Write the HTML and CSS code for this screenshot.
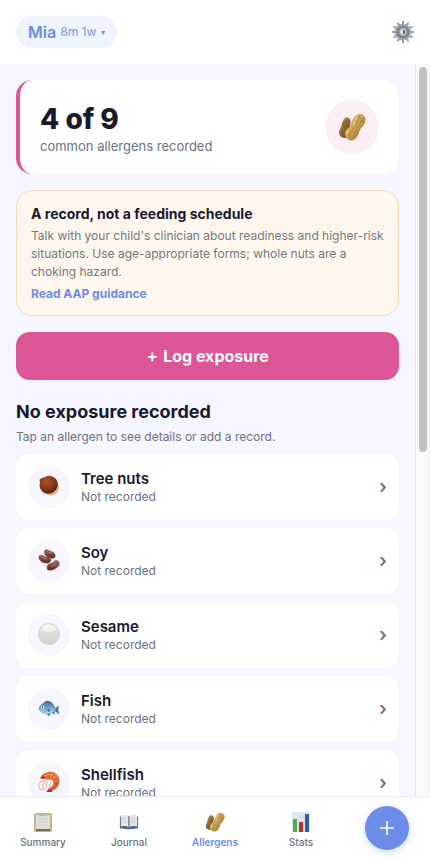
FILE: index.html
```html
<!DOCTYPE html>
<html lang="en">
<head>
<meta charset="utf-8">
<meta name="viewport" content="width=device-width, initial-scale=1">
<title>Allergens</title>
<link rel="stylesheet" href="styles.css">
</head>
<body>
<svg class="defs" aria-hidden="true">
  <defs>
    <linearGradient id="shell" x1="0" y1="0" x2="1" y2="1"><stop offset="0" stop-color="#e6c77c"/><stop offset=".5" stop-color="#cda354"/><stop offset="1" stop-color="#7d5727"/></linearGradient>
    <linearGradient id="shell-dark" x1="0" y1="0" x2="1" y2="1"><stop offset="0" stop-color="#c99f50"/><stop offset="1" stop-color="#4f3515"/></linearGradient>
    <radialGradient id="nut" cx=".4" cy=".3" r=".8"><stop offset="0" stop-color="#ad532a"/><stop offset=".5" stop-color="#8a3a1b"/><stop offset="1" stop-color="#481a0c"/></radialGradient>
    <linearGradient id="bean" x1="0" y1="0" x2="0" y2="1"><stop offset="0" stop-color="#a5675c"/><stop offset="1" stop-color="#572822"/></linearGradient>
    <linearGradient id="pearl" x1="0" y1="0" x2="0" y2="1"><stop offset="0" stop-color="#f0f0ee"/><stop offset=".45" stop-color="#dbdbd8"/><stop offset="1" stop-color="#d3d4d0"/></linearGradient>
    <linearGradient id="scales" x1="0" y1="0" x2="0" y2="1"><stop offset="0" stop-color="#487ba9"/><stop offset=".5" stop-color="#77add6"/><stop offset="1" stop-color="#c1def0"/></linearGradient>
    <linearGradient id="prawn" x1="0" y1="0" x2="1" y2="1"><stop offset="0" stop-color="#cf4b20"/><stop offset=".5" stop-color="#ee8346"/><stop offset="1" stop-color="#c53a20"/></linearGradient>
    <linearGradient id="page" x1="0" y1="0" x2="1" y2="0"><stop offset="0" stop-color="#dfe3e7"/><stop offset=".8" stop-color="#eef0f2"/><stop offset="1" stop-color="#9ca6b0"/></linearGradient>
    <symbol id="peanuts" viewBox="0 0 28 28">
      <path d="M6 6C9 3 13 5 12.500 10C12 13 11 14 12 17C13 21 11 25 7 25C2 25 0 21 1.500 17C4 14 3 10 6 6Z" fill="url(#shell-dark)"/>
      <path d="M4 12L8 8M4 16L9 11M3 21L7 16" fill="none" stroke="#77531f" stroke-width=".6"/>
      <path d="M17 3C21-1 28 1 27.500 7C27.500 12 23 14 21.500 18C20 24 16 29 11 27C6 25 6 19 9 16C14 13 13 7 17 3Z" fill="url(#shell)"/>
      <path d="M22 2C19 7 20 11 15 16C12 19 11 22 11 26M26 4C23 10 21 12 18 17L15 25" fill="none" stroke="#a67b39" stroke-width=".7"/>
      <path d="M17 7L20 9M22 8L25 9M13 17L17 20M10 20L13 23M20 4L23 5" fill="none" stroke="#967033" stroke-width=".6"/>
      <path d="M19 4C17 6 17 9 16 12M10 18L9 21" fill="none" stroke="#f2dc9c"/>
    </symbol>
  </defs>
</svg>

<header class="topbar">
  <button class="child" type="button"><span class="child-name">Mia</span><span class="child-age">8m 1w</span><span class="child-caret">▾</span></button>
  <button class="settings" type="button" aria-label="Settings">
    <svg width="22" height="22" viewBox="0 0 22 22">
      <path d="M11 0V22M0 11H22M1.500 5.500L20.500 16.500M5.500 1.500L16.500 20.500M16.500 1.500L5.500 20.500M20.500 5.500L1.500 16.500" stroke="#98a3ac" stroke-width="2"/>
      <circle cx="11" cy="11" r="8" fill="#a0aab2" stroke="#8a959f" stroke-width=".6"/>
      <circle cx="11" cy="11" r="5.500" fill="#8a959e" stroke="#63707b" stroke-width="1.200"/>
      <circle cx="11" cy="11" r="3.400" fill="#dce3e8" stroke="#9da8b1"/>
      <path d="M11 9A2 2 0 0 1 11 13Z" fill="#3f4b56"/>
    </svg>
  </button>
</header>

<div class="viewport">
  <main class="content">
    <section class="progress">
      <div>
        <h1 class="progress-count">4 of 9</h1>
        <p class="progress-label">common allergens recorded</p>
      </div>
      <div class="progress-icon"><svg width="28" height="28" aria-hidden="true"><use href="#peanuts"/></svg></div>
    </section>

    <section class="notice">
      <h2 class="notice-title">A record, not a feeding schedule</h2>
      <p class="notice-text">Talk with your child's clinician about readiness and higher-risk situations. Use age-appropriate forms; whole nuts are a choking hazard.</p>
      <a class="notice-link" href="#">Read AAP guidance</a>
    </section>

    <button class="log" type="button"><span class="log-plus">+</span><span>Log exposure</span></button>

    <section>
      <h2 class="list-title">No exposure recorded</h2>
      <p class="list-hint">Tap an allergen to see details or add a record.</p>
      <div class="list">
        <button class="row" type="button">
          <span class="row-icon"><svg width="22" height="22" viewBox="0 0 24 24" aria-hidden="true"><path d="M19 5C24 10 24 17 20 20C17 23 12 23 8 20Z" fill="#d3bf85"/><path d="M2 5C4 2 7 3 10 1C16 0 22 4 21.500 11C21 18 14 22 8 20C3 18 1 13 2 9C3 8 1 7 2 5Z" fill="url(#nut)"/></svg></span>
          <span class="row-text"><span class="row-name">Tree nuts</span><span class="row-state">Not recorded</span></span>
          <span class="row-chevron">›</span>
        </button>
        <button class="row" type="button">
          <span class="row-icon"><svg width="22" height="22" viewBox="0 0 24 24" aria-hidden="true"><g fill="url(#bean)" stroke="#6b3630" stroke-width=".5"><path d="M7 2C9-1 12 2 15 3C19 4 20 9 17 10C12 11 6 7 7 2Z"/><path d="M1 8C3 5 6 8 10 9C14 9 16 13 12 15C7 17 0 13 1 8Z"/><path d="M10 19C11 15 15 17 17 14C19 11 24 13 23 17C21 22 13 25 10 22Z"/></g><path d="M10 3L15 5M4 9L10 11M14 19C17 19 19 17 20 15" fill="none" stroke="#c48d83" stroke-width=".8"/></svg></span>
          <span class="row-text"><span class="row-name">Soy</span><span class="row-state">Not recorded</span></span>
          <span class="row-chevron">›</span>
        </button>
        <button class="row" type="button">
          <span class="row-icon"><svg width="22" height="22" viewBox="0 0 24 24" aria-hidden="true"><circle cx="12" cy="12" r="11.500" fill="url(#pearl)" stroke="#c9cac6" stroke-width=".7"/><ellipse cx="12" cy="6" rx="7.500" ry="4" fill="#fff" opacity=".5"/></svg></span>
          <span class="row-text"><span class="row-name">Sesame</span><span class="row-state">Not recorded</span></span>
          <span class="row-chevron">›</span>
        </button>
        <button class="row" type="button">
          <span class="row-icon"><svg width="22" height="22" viewBox="0 0 24 24" aria-hidden="true"><path d="M6 8C7 3 12 3 16 7L18 11ZM8 17L12 21L14 18ZM15 16L18 20L18 15ZM18 13L23 9C22 12 22 15 23 19L18 15Z" fill="#3b6c98"/><path d="M1 12C3 7 8 5 13 7C17 8 18 11 20 13C17 17 12 20 7 18C4 17 1 16 1 12Z" fill="url(#scales)" stroke="#5589b3" stroke-width=".5"/><path d="M8 9C10 11 9 14 7 17" fill="none" stroke="#5b90b9" stroke-width=".7"/><path d="M10 13L14 14L11 17Z" fill="#3c729e"/><circle cx="5" cy="11" r="1.700" fill="#fff"/><circle cx="5" cy="11" r=".9" fill="#172b3c"/></svg></span>
          <span class="row-text"><span class="row-name">Fish</span><span class="row-state">Not recorded</span></span>
          <span class="row-chevron">›</span>
        </button>
        <button class="row" type="button">
          <span class="row-icon"><svg width="22" height="22" viewBox="0 0 24 24" aria-hidden="true"><path d="M2 8C4 3 11 0 16 1C22 2 24 8 23 13C22 18 18 21 13 22L12 19C16 17 18 14 16 11C14 8 9 11 2 8Z" fill="url(#prawn)"/><path d="M13 2L12 8M18 3L15 8M22 7L17 10M22 14L17 13M18 19L15 16" stroke="#b8492c" stroke-width=".6"/><path d="M13 19L16 23L9 23L11 20Z" fill="#b82921"/><path d="M8 11C3 10 0 14 1 17C2 21 6 22 8 19M9 12C5 13 4 16 6 19M11 12C9 13 8 16 10 19M14 13L12 18" fill="none" stroke="#e98468" stroke-width=".9"/><path d="M6 6C9 4 12 3 15 4" fill="none" stroke="#ffc274"/><circle cx="6" cy="7" r="1" fill="#251511"/></svg></span>
          <span class="row-text"><span class="row-name">Shellfish</span><span class="row-state">Not recorded</span></span>
          <span class="row-chevron">›</span>
        </button>
      </div>
    </section>
  </main>
  <div class="track" aria-hidden="true"><div class="thumb"></div></div>
</div>

<nav class="tabs">
  <a class="tab" href="#"><svg width="20" height="20" viewBox="0 0 20 20" aria-hidden="true"><rect x="1.500" y="1.500" width="17" height="18" rx="1" fill="#cdb978" stroke="#a3935f" stroke-width=".6"/><path d="M3 3H17V17H3Z" fill="#dcdddd"/><path d="M3 18H17" stroke="#57492a" stroke-width="1.400"/><path d="M5 7H15M5 10H15M5 13H15" stroke="#cfd1d3" stroke-width=".8"/><path d="M6 4V2H8C9 0 11 0 12 2H14V4Z" fill="#b9bcb5"/></svg><span>Summary</span></a>
  <a class="tab" href="#"><svg width="20" height="20" viewBox="0 0 22 22" aria-hidden="true"><path d="M1 5L10 4L11 5L12 4L21 5V18L12 19H10L1 18Z" fill="#486780"/><path d="M2 4C5 2 9 3 11 5V17C8 15 5 15 2 16Z" fill="url(#page)"/><path d="M20 4C17 2 13 3 11 5V17C14 15 17 15 20 16Z" fill="#e2e5e8"/><path d="M11 5V18" stroke="#53616d"/><path d="M4 6H9M4 8H9M4 10H9M4 12H9M13 6H18M13 8H18M13 10H18M13 12H18" stroke="#c3cad0" stroke-width=".7"/></svg><span>Journal</span></a>
  <a class="tab tab-active" href="#" aria-current="page"><svg width="20" height="20" aria-hidden="true"><use href="#peanuts"/></svg><span>Allergens</span></a>
  <a class="tab" href="#"><svg width="20" height="20" viewBox="0 0 20 20" aria-hidden="true"><rect x="1" y="0" width="18" height="20" fill="#e0e9ef"/><path d="M1 5H19M1 10H19M1 15H19M7 0V20M13 0V20" stroke="#cfdbe3" stroke-width=".6"/><rect x="2" y="7" width="4" height="13" fill="#4db04f"/><rect x="8" y="10" width="4" height="10" fill="#bf3030"/><rect x="14" y="2" width="4" height="18" fill="#305cad"/></svg><span>Stats</span></a>
  <div class="add-slot"><button class="add" type="button" aria-label="Add"><svg width="16" height="16" viewBox="0 0 16 16"><path d="M8 1V15M1 8H15" stroke="#fff" stroke-width="1.600"/></svg></button></div>
</nav>
</body>
</html>
```

FILE: styles.css
```css
* {
  box-sizing: border-box;
  margin: 0;
}

body {
  display: flex;
  flex-direction: column;
  height: 100vh;
  overflow: hidden;
  font-family: Inter, "Liberation Sans", sans-serif;
  color: #1a1a2e;
  background: #fff;
}

button {
  border: 0;
  font: inherit;
  color: inherit;
  cursor: pointer;
}

a {
  text-decoration: none;
}

svg {
  display: block;
}

.defs {
  position: absolute;
  width: 0;
  height: 0;
}

.topbar {
  display: flex;
  align-items: center;
  justify-content: space-between;
  padding: 16px;
}

.child {
  display: flex;
  align-items: center;
  gap: 4px;
  padding: 6px 12px;
  border-radius: 20px;
  background: #f0f4ff;
  color: #6b8ce8;
  line-height: 20px;
}

.child-name {
  font-size: 16px;
  font-weight: 600;
}

.child-age {
  font-size: 12px;
  font-weight: 500;
  color: #8aa3ea;
}

.child-caret {
  padding-left: 1px;
  font-size: 8px;
}

.settings {
  padding: 0;
  background: none;
}

.viewport {
  display: flex;
  flex: 1;
  min-height: 0;
}

.content {
  flex: 1;
  min-width: 0;
  padding: 16px;
  overflow-y: auto;
  scrollbar-width: none;
  background: #f5f6ff;
}

.track {
  width: 15px;
  padding: 3px;
  border-left: 1px solid #e6e6ea;
  border-right: 1px solid #efefef;
  background: #fafafa;
}

.thumb {
  height: 53%;
  width: 8px;
  border-radius: 4px;
  background: #c1c1c1;
}

.progress {
  display: flex;
  align-items: center;
  justify-content: space-between;
  padding: 20px;
  border-left: 4px solid #db5597;
  border-radius: 16px;
  background: #fff;
}

.progress-count {
  font-size: 28px;
  font-weight: 800;
  line-height: 38px;
}

.progress-label {
  font-size: 13px;
  line-height: 16px;
  color: #6b7280;
}

.progress-icon {
  display: grid;
  place-items: center;
  width: 54px;
  height: 54px;
  border-radius: 50%;
  background: #fdeef5;
}

.notice {
  margin-top: 16px;
  padding: 14px;
  border: 1px solid #f5dcb5;
  border-radius: 16px;
  background: #fff7ed;
}

.notice-title {
  font-size: 14px;
  font-weight: 700;
  line-height: 18px;
}

.notice-text {
  margin: 4px 0 6px;
  font-size: 12px;
  line-height: 18px;
  color: #737780;
}

.notice-link {
  display: block;
  font-size: 12px;
  font-weight: 700;
  line-height: 14px;
  color: #6b8ce8;
}

.log {
  display: flex;
  justify-content: center;
  gap: 5px;
  width: 100%;
  margin-top: 16px;
  padding: 14px;
  border-radius: 14px;
  background: #db5597;
  color: #fff;
  font-size: 16px;
  font-weight: 700;
  line-height: 20px;
}

.log-plus {
  font-size: 18px;
  font-weight: 500;
}

.list-title {
  margin-top: 20px;
  font-size: 18px;
  font-weight: 700;
  line-height: 24px;
}

.list-hint {
  margin: 4px 0 8px;
  font-size: 12px;
  line-height: 18px;
  color: #6b7280;
}

.list {
  display: flex;
  flex-direction: column;
  gap: 8px;
}

.row {
  display: flex;
  align-items: center;
  gap: 11px;
  padding: 12px;
  border-radius: 14px;
  background: #fff;
  text-align: left;
}

.row-icon {
  display: grid;
  place-items: center;
  width: 42px;
  height: 42px;
  padding-bottom: 3px;
  border-radius: 50%;
  background: #f5f6ff;
}

.row-text {
  display: flex;
  flex: 1;
  flex-direction: column;
}

.row-name {
  font-size: 15px;
  font-weight: 600;
  line-height: 20px;
}

.row-state {
  font-size: 12px;
  line-height: 16px;
  color: #6b7280;
}

.row-chevron {
  font-size: 19px;
  font-weight: 600;
  line-height: 24px;
  color: #6b7280;
}

.tabs {
  display: grid;
  grid-template-columns: repeat(5, 1fr);
  align-items: center;
  padding: 9px 0 10px;
  border-top: 1px solid #e5e7eb;
  background: #fff;
}

.tab {
  display: flex;
  flex-direction: column;
  align-items: center;
  gap: 3px;
  padding-top: 5px;
  font-size: 10px;
  font-weight: 500;
  line-height: 14px;
  color: #6b7280;
}

.tab-active {
  color: #6b8ce8;
  font-weight: 600;
}

.add-slot {
  display: grid;
  place-items: center;
}

.add {
  display: grid;
  place-items: center;
  width: 44px;
  height: 44px;
  padding: 0;
  border-radius: 50%;
  background: #6b8ce8;
  box-shadow: 0 2px 8px #6b8ce855;
}
```
